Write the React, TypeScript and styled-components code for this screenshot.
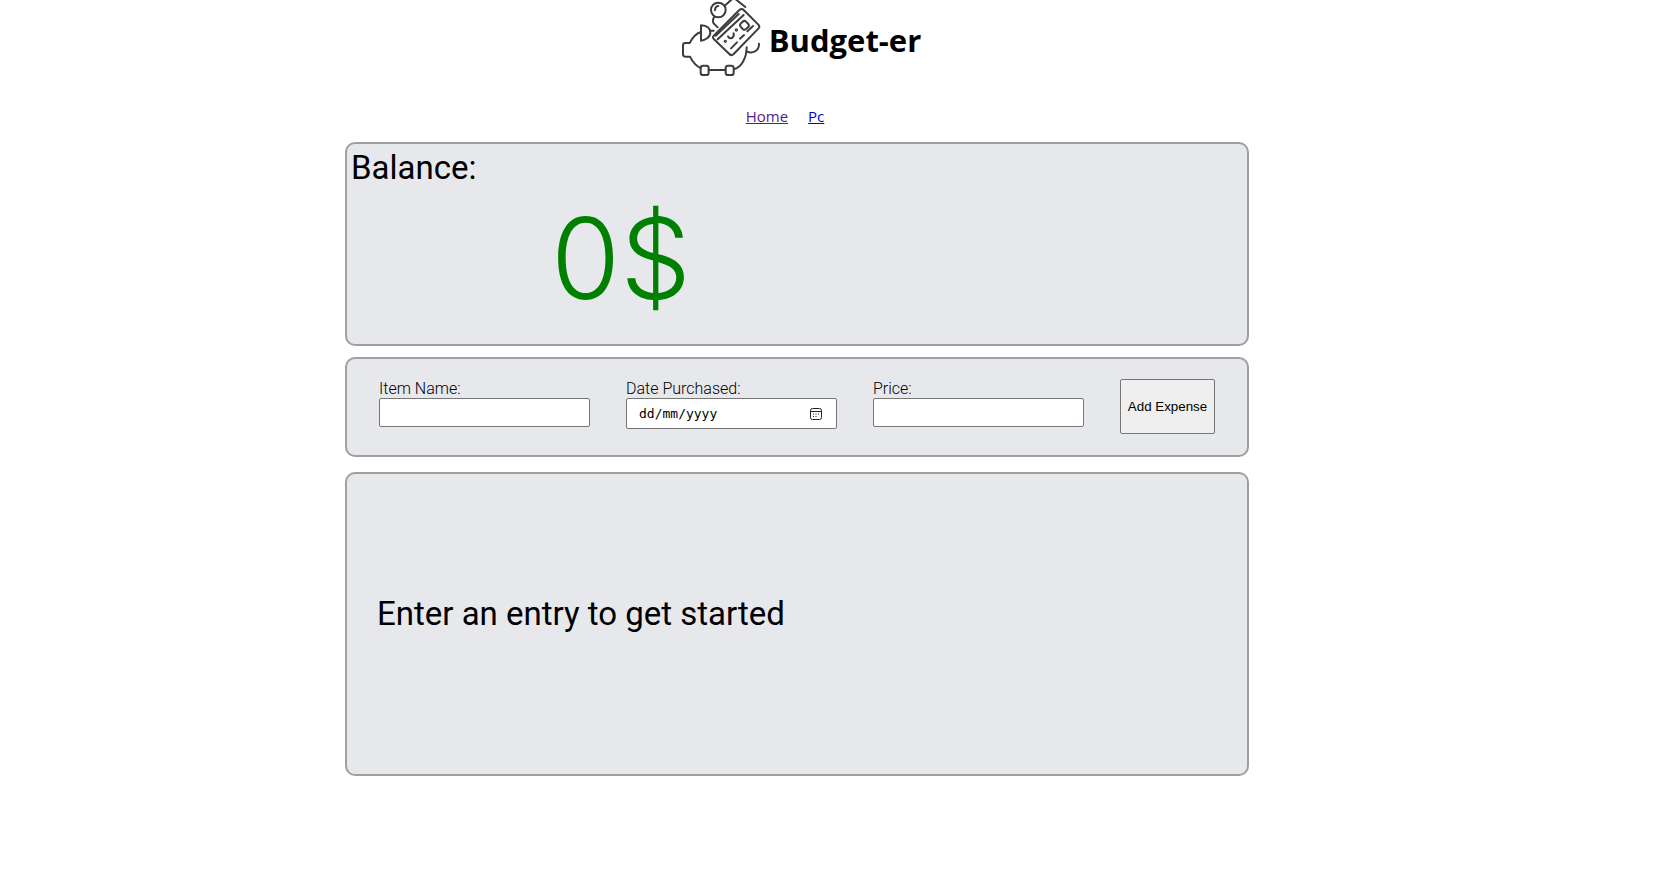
import React from "react";
import styled, { createGlobalStyle } from "styled-components";

const GlobalStyle = createGlobalStyle`
  *, *::before, *::after { box-sizing: border-box; }
  body {
    margin: 0;
    background: #fff;
    color: #000;
    font-family: Roboto, "Liberation Sans", sans-serif;
    font-size: 16px;
    font-weight: 300;
  }
`;

const Page = styled.div`
  display: grid;
  grid-template-columns: 345fr minmax(0, 904px) 406fr;
`;

const Column = styled.div`
  grid-column: 2;
  display: flex;
  flex-direction: column;
  padding-bottom: 20px;
`;

const Header = styled.header`
  display: flex;
  justify-content: center;
  align-items: center;
  gap: 8px;
  padding-left: 8px;
`;

const Logo = styled.svg`
  width: 80px;
  height: 80px;
  flex: none;
  fill: none;
  stroke: #3c3c3c;
  stroke-width: 6;
  stroke-linecap: round;
  stroke-linejoin: round;
`;

const Title = styled.h1`
  margin: 0;
  font-family: "Open Sans", sans-serif;
  font-size: 31px;
  line-height: 44px;
  font-weight: 700;
`;

const Nav = styled.nav`
  display: flex;
  justify-content: center;
  gap: 20px;
  padding: 25px 24px 15px 0;
  font-family: "Open Sans", sans-serif;
  font-size: 15px;
  font-weight: 400;
  line-height: 22px;
`;

const NavLink = styled.a<{ $visited?: boolean }>`
  color: ${(p) => (p.$visited ? "#551a8b" : "#0000ee")};
`;

const Panel = styled.section`
  border: 2px solid #9f9f9f;
  border-radius: 10px;
  background: #e7e8ec;
`;

const BalancePanel = styled(Panel)`
  min-height: 204px;
  padding: 4px;
`;

const Heading = styled.h2`
  margin: 0;
  font-size: 33px;
  line-height: 40px;
  font-weight: 400;
`;

const Amount = styled.p`
  margin: 0;
  padding-left: 200px;
  color: #008000;
  font-family: Inter, sans-serif;
  font-size: 112px;
  line-height: 140px;
`;

const ExpenseForm = styled.form`
  display: grid;
  grid-template-columns: repeat(3, minmax(0, 1fr)) 95px;
  align-items: start;
  gap: 36px;
  margin-top: 11px;
  padding: 20px 32px 21px;
  border: 2px solid #9f9f9f;
  border-radius: 10px;
  background: #e7e8ec;
`;

const Field = styled.div`
  display: flex;
  flex-direction: column;
`;

const Label = styled.label`
  line-height: 19px;
`;

const TextInput = styled.input`
  width: 100%;
  height: 29px;
  padding: 0 12px;
  border: 1px solid #767676;
  border-radius: 2px;
  background: #fff;
  font-family: "Liberation Sans", sans-serif;
  font-size: 13px;
`;

const DateBox = styled.div`
  display: flex;
  align-items: center;
  height: 31px;
  padding: 0 14px 0 12px;
  border: 1px solid #767676;
  border-radius: 2px;
  background: #fff;
`;

const DateInput = styled.input`
  flex: 1;
  min-width: 0;
  padding: 0;
  border: 0;
  outline: 0;
  background: transparent;
  font-family: "DejaVu Sans Mono", monospace;
  font-size: 13px;
  &::placeholder { color: #000; opacity: 1; }
`;

const PickerButton = styled.button`
  display: flex;
  padding: 0;
  border: 0;
  background: none;
`;

const AddButton = styled.button`
  height: 55px;
  padding: 0;
  border: 1px solid #767676;
  border-radius: 2px;
  background: #efefef;
  color: #000;
  font-family: "Liberation Sans", sans-serif;
  white-space: nowrap;
`;

const EntriesPanel = styled(Panel)`
  min-height: 304px;
  margin-top: 15px;
  padding: 120px 30px;
`;

function PiggyLogo() {
  return (
    <Logo viewBox="18 0 240 240" aria-hidden="true">
      <circle cx="130" cy="30" r="22" />
      <path d="M120 31c0-7 4-12 10-13" />
      <path d="M149 17L176-7L211 21" />
      <path d="M117 52c-5 8-4 18 2 21l9 9" />
      <path d="M193 30q7-6 13 0l44 44q6 6 0 12l-74 76q-7 7-13 0l-46-44q-6-6 0-12z" />
      <path d="M122 107L191 42M128 118L206 45" />
      <path d="M202 66q6-6 11-1l7 7q4 5-1 10l-6 5q-6 5-10 0l-6-7q-4-5 0-9z" />
      <path d="M159 109q4 8 11 5q8-4 6-14M217 94l17-16M195 116l12-11M168 145l18-18" />
      <circle cx="151" cy="124" r="2" />
      <circle cx="184" cy="90" r="2" />
      <path d="M78 76v46c12-1 28-10 28-24s-13-21-28-22zM106 92h10" />
      <path d="M76 97c-14 4-22 14-32 32H31q-7 0-7 7v27q0 7 7 7h14c8 16 17 28 32 34" />
      <path d="M101 210h50M178 207c20-5 37-32 37-65" />
      <path d="M215 154c16 8 38 0 37-23" />
      <rect x="77" y="197" width="24" height="28" rx="7" />
      <rect x="152" y="197" width="24" height="28" rx="7" />
    </Logo>
  );
}

function CalendarIcon() {
  return (
    <svg width="12" height="12" viewBox="0 0 12 12" fill="none" stroke="#222" aria-hidden="true">
      <rect x="0.5" y="0.5" width="11" height="11" rx="2" />
      <path d="M1 3.5h10" />
      <path d="M3 6h1M5.5 6h1M8 6h1M3 8.5h1M5.5 8.5h1" />
    </svg>
  );
}

export default function App() {
  return (
    <Page>
      <GlobalStyle />
      <Column>
        <Header>
          <PiggyLogo />
          <Title>Budget-er</Title>
        </Header>
        <Nav>
          <NavLink href="#home" $visited>Home</NavLink>
          <NavLink href="#pc">Pc</NavLink>
        </Nav>
        <main>
          <BalancePanel>
            <Heading>Balance:</Heading>
            <Amount>0$</Amount>
          </BalancePanel>
          <ExpenseForm onSubmit={(e) => e.preventDefault()}>
            <Field>
              <Label htmlFor="item">Item Name:</Label>
              <TextInput id="item" type="text" />
            </Field>
            <Field>
              <Label htmlFor="date">Date Purchased:</Label>
              <DateBox>
                <DateInput id="date" type="text" placeholder="dd/mm/yyyy" />
                <PickerButton type="button" aria-label="Open calendar">
                  <CalendarIcon />
                </PickerButton>
              </DateBox>
            </Field>
            <Field>
              <Label htmlFor="price">Price:</Label>
              <TextInput id="price" type="text" inputMode="decimal" />
            </Field>
            <AddButton type="submit">Add Expense</AddButton>
          </ExpenseForm>
          <EntriesPanel>
            <Heading>Enter an entry to get started</Heading>
          </EntriesPanel>
        </main>
      </Column>
    </Page>
  );
}
